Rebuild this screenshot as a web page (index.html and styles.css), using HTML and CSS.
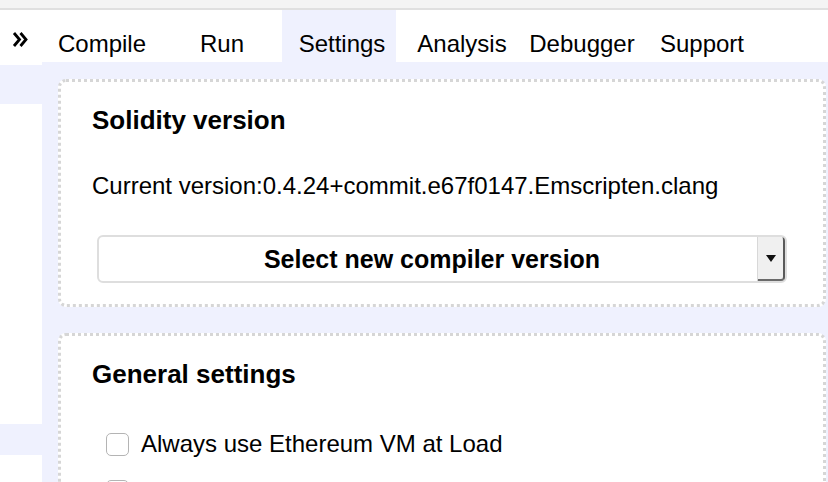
FILE: index.html
```html
<!DOCTYPE html>
<html>
<head>
<meta charset="utf-8">
<link rel="stylesheet" href="styles.css">
</head>
<body>
<div class="topbar"></div>
<div class="main">
  <div class="side">
    <div class="side-white s1"></div>
    <div class="side-band b1"></div>
    <div class="side-white s2"></div>
    <div class="side-band b2"></div>
    <div class="side-white s3"></div>
  </div>
  <div class="panel">
    <div class="tabbar">
      <span class="toggle"><svg width="17" height="17" viewBox="0 0 17 17"><polyline points="2,2 7.5,8.5 2,15" fill="none" stroke="#000" stroke-width="2.8"/><polyline points="8.5,2 14,8.5 8.5,15" fill="none" stroke="#000" stroke-width="2.8"/></svg></span>
      <div class="tab">Compile</div>
      <div class="tab">Run</div>
      <div class="tab active">Settings</div>
      <div class="tab">Analysis</div>
      <div class="tab">Debugger</div>
      <div class="tab">Support</div>
    </div>
    <div class="content">
      <section class="card card-version">
        <h2 class="card-title">Solidity version</h2>
        <div class="current">Current version:0.4.24+commit.e67f0147.Emscripten.clang</div>
        <div class="select">
          <span class="select-label">Select new compiler version</span>
          <span class="select-arrow"><span class="tri"></span></span>
        </div>
      </section>
      <section class="card card-general">
        <h2 class="card-title">General settings</h2>
        <label class="check-row"><input type="checkbox" class="check"><span>Always use Ethereum VM at Load</span></label>
        <label class="check-row"><input type="checkbox" class="check"></label>
      </section>
    </div>
  </div>
</div>
</body>
</html>
```

FILE: styles.css
```css
* { box-sizing: border-box; }
html, body { margin: 0; padding: 0; }
body {
  width: 828px;
  height: 482px;
  overflow: hidden;
  font-family: "Liberation Sans", Arial, sans-serif;
  color: #000;
  background: #fff;
}
.topbar {
  height: 10px;
  background: #f4f4f4;
  border-bottom: 2px solid #e0e0e0;
}
.main {
  display: flex;
  height: 472px;
}
.side {
  width: 42px;
  flex: none;
  display: flex;
  flex-direction: column;
}
.side-white { background: #fff; }
.side-band { background: #eff1fe; }
.s1 { height: 55px; }
.b1 { height: 39px; }
.s2 { height: 320px; }
.b2 { height: 31px; }
.s3 { flex: 1; }
.panel {
  flex: 1;
  display: flex;
  flex-direction: column;
  background: #eff1fe;
}
.tabbar {
  height: 52px;
  background: #fff;
  display: flex;
  align-items: stretch;
  position: relative;
}
.toggle {
  position: absolute;
  left: -30px;
  top: 21px;
  width: 17px;
  height: 17px;
}
.toggle svg { display: block; }
.tab {
  width: 114px;
  margin-right: 6px;
  padding: 20px 0 4px 6px;
  font-size: 24px;
  line-height: 28px;
  text-align: center;
  white-space: nowrap;
}
.tab.active { background: #eff1fe; }
.content {
  padding: 17px 2px 0 16px;
  display: flex;
  flex-direction: column;
  gap: 26px;
}
.card {
  background: #fff;
  border: 3px dotted #d6d6d6;
  border-radius: 8px;
  padding: 23px 31px 21px 31px;
}
.card-title {
  margin: 0;
  font-size: 26px;
  line-height: 30px;
  font-weight: bold;
}
.current {
  margin-top: 37px;
  font-size: 24px;
  line-height: 28px;
}
.select {
  margin: 35px 5px 0 5px;
  height: 48px;
  border: 2px solid #dedede;
  border-radius: 6px;
  display: flex;
  align-items: stretch;
  overflow: hidden;
}
.select-label {
  flex: 1;
  display: flex;
  align-items: center;
  justify-content: center;
  font-size: 25px;
  font-weight: bold;
  padding-left: 8px;
}
.select-arrow {
  width: 30px;
  margin: -2px -2px -2px 0;
  background: #f0f0f0;
  border-left: 1px solid #d8d8d8;
  border-right: 4px solid #5a5a5a;
  border-bottom: 4px solid #6a6a6a;
  border-radius: 0 6px 6px 0;
  display: flex;
  align-items: center;
  justify-content: center;
}
.tri {
  width: 0;
  height: 0;
  border-left: 5px solid transparent;
  border-right: 5px solid transparent;
  border-top: 7px solid #111;
  margin-top: 2px;
}
.card-general { padding-bottom: 40px; }
.check-row {
  display: flex;
  align-items: center;
  gap: 12px;
  margin-left: 14px;
  font-size: 24px;
  line-height: 28px;
  height: 28px;
}
.card-general .check-row:first-of-type { margin-top: 41px; }
.check-row + .check-row { margin-top: 19px; }
.check {
  appearance: none;
  -webkit-appearance: none;
  margin: 0;
  width: 23px;
  height: 23px;
  border: 1.5px solid #b4b4b4;
  border-radius: 5px;
  background: #fff;
  flex: none;
}
```
